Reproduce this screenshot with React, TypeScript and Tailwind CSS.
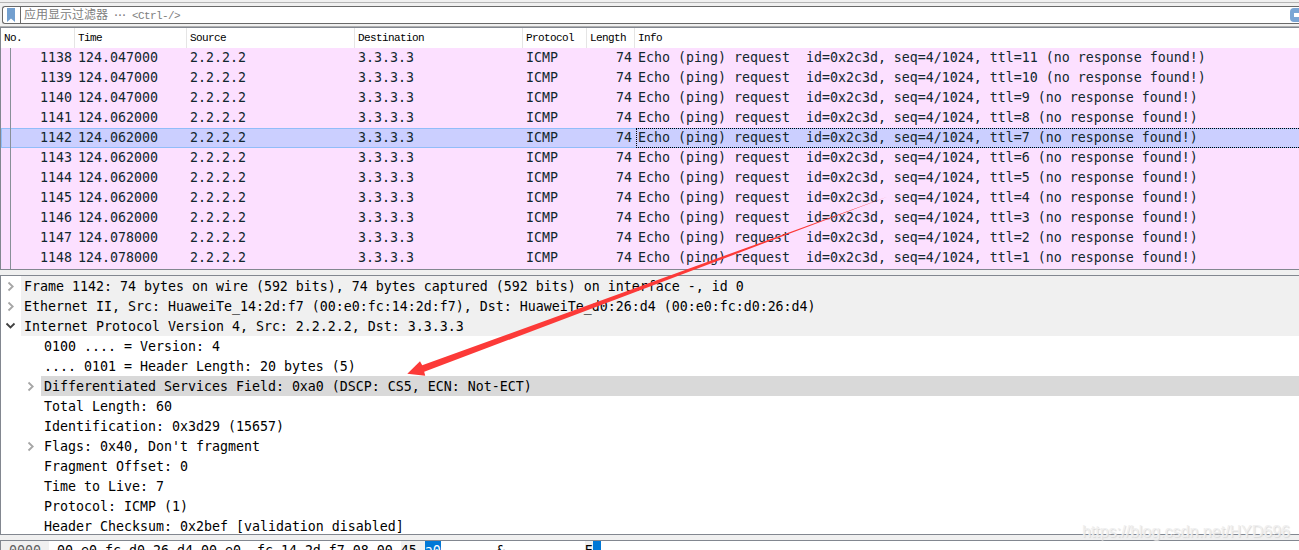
import React from 'react';
import clsx from 'clsx';

interface Packet {
  no: number;
  time: string;
  ttl: number;
}

interface DetailRow {
  text: string;
  level: 0 | 1;
  state?: 'open' | 'closed';
  selected?: boolean;
}

const SELECTED_NO = 1142;

const packets: Packet[] = [
  { no: 1138, time: '124.047000', ttl: 11 },
  { no: 1139, time: '124.047000', ttl: 10 },
  { no: 1140, time: '124.047000', ttl: 9 },
  { no: 1141, time: '124.062000', ttl: 8 },
  { no: 1142, time: '124.062000', ttl: 7 },
  { no: 1143, time: '124.062000', ttl: 6 },
  { no: 1144, time: '124.062000', ttl: 5 },
  { no: 1145, time: '124.062000', ttl: 4 },
  { no: 1146, time: '124.062000', ttl: 3 },
  { no: 1147, time: '124.078000', ttl: 2 },
  { no: 1148, time: '124.078000', ttl: 1 },
];

const details: DetailRow[] = [
  { level: 0, state: 'closed', text: 'Frame 1142: 74 bytes on wire (592 bits), 74 bytes captured (592 bits) on interface -, id 0' },
  { level: 0, state: 'closed', text: 'Ethernet II, Src: HuaweiTe_14:2d:f7 (00:e0:fc:14:2d:f7), Dst: HuaweiTe_d0:26:d4 (00:e0:fc:d0:26:d4)' },
  { level: 0, state: 'open', text: 'Internet Protocol Version 4, Src: 2.2.2.2, Dst: 3.3.3.3' },
  { level: 1, text: '0100 .... = Version: 4' },
  { level: 1, text: '.... 0101 = Header Length: 20 bytes (5)' },
  { level: 1, state: 'closed', selected: true, text: 'Differentiated Services Field: 0xa0 (DSCP: CS5, ECN: Not-ECT)' },
  { level: 1, text: 'Total Length: 60' },
  { level: 1, text: 'Identification: 0x3d29 (15657)' },
  { level: 1, state: 'closed', text: "Flags: 0x40, Don't fragment" },
  { level: 1, text: 'Fragment Offset: 0' },
  { level: 1, text: 'Time to Live: 7' },
  { level: 1, text: 'Protocol: ICMP (1)' },
  { level: 1, text: 'Header Checksum: 0x2bef [validation disabled]' },
];

const COLUMNS = 'grid grid-cols-[74px_112px_168px_168px_64px_48px_1fr]';
const MONO = "font-['DejaVu_Sans_Mono',monospace] text-[13.29px] whitespace-pre";
const HEADER_FONT = "font-['Liberation_Mono','Noto_Sans_CJK_SC',monospace]";

const FilterBar: React.FC = () => (
  <div className="h-[26px] bg-[#f0f0f0]">
    <div className="mb-[3px] h-[3px] border-b border-[#b5b5b5]" />
    <div className="ml-0.5 flex h-[18px] items-center rounded-l-[3px] border border-r-0 border-[#696969] bg-white">
      <svg className="ml-1 h-[14px] w-2 shrink-0" viewBox="0 0 8 14">
        <path d="M0 0h8v14L4 10.5 0 14z" fill="#729fcf" />
      </svg>
      <div className="ml-[5px] h-4 w-px bg-[#696969]" />
      <div className={clsx(HEADER_FONT, 'ml-[3px] flex items-center pt-0.5 text-xs leading-4 text-[#808080]')}>
        <span>应用显示过滤器</span>
        <span className="ml-[5px] w-[19px] text-[10px] font-bold tracking-[-2px]">···</span>
        <span className="text-[11px] tracking-[-0.6px]">&lt;Ctrl-/&gt;</span>
      </div>
      <div className="ml-auto flex h-[14px] w-[9px] items-center justify-end rounded-l-sm bg-[#7aa5d5]">
        <div className="h-1 w-[5px] bg-white" />
      </div>
    </div>
  </div>
);

const TableHeader: React.FC = () => {
  const titles = ['No.', 'Time', 'Source', 'Destination', 'Protocol', 'Length', 'Info'];
  return (
    <div className={clsx(COLUMNS, HEADER_FONT, 'h-5 bg-white text-[11px] leading-[21px] tracking-[-0.6px] text-black')}>
      {titles.map((title) => (
        <div key={title} className="h-5 border-r border-[#e5e5e5] pl-[3px] last:border-r-0">
          {title}
        </div>
      ))}
    </div>
  );
};

const PacketRow: React.FC<{ packet: Packet }> = ({ packet }) => {
  const selected = packet.no === SELECTED_NO;
  return (
    <div
      className={clsx(
        COLUMNS,
        MONO,
        'h-5 leading-5 text-[#12272e]',
        selected
          ? 'bg-[#cbcfff] shadow-[inset_0_1px_#91bdf9,inset_0_-1px_#91bdf9,inset_1px_0_#91bdf9]'
          : 'bg-[#fce0ff]'
      )}
    >
      <div className="pr-[3px] text-right">{packet.no}</div>
      <div className="pl-[3px]">{packet.time}</div>
      <div className="pl-[3px]">2.2.2.2</div>
      <div className="pl-[3px]">3.3.3.3</div>
      <div className="pl-[3px]">ICMP</div>
      <div className="pr-[3px] text-right">74</div>
      <div
        className={clsx(
          selected
            ? 'ml-px border border-r-0 border-dotted border-black pl-px leading-[18px]'
            : 'pl-[3px]'
        )}
      >
        {`Echo (ping) request  id=0x2c3d, seq=4/1024, ttl=${packet.ttl} (no response found!)`}
      </div>
    </div>
  );
};

const Chevron: React.FC<{ open: boolean }> = ({ open }) => (
  <svg className="h-5 w-5 shrink-0" viewBox="0 0 20 20" fill="none" strokeWidth="1.8">
    {open ? (
      <path d="M5.5 7.5L9.5 11.5L13.5 7.5" stroke="#404040" />
    ) : (
      <path d="M7.5 6.5L11.7 10.5L7.5 14.5" stroke="#a6a6a6" />
    )}
  </svg>
);

const Detail: React.FC<{ row: DetailRow }> = ({ row }) => (
  <div className={clsx(MONO, 'flex h-5 leading-[22px] text-black', row.level === 1 && 'pl-5')}>
    {row.state ? <Chevron open={row.state === 'open'} /> : <div className="w-5 shrink-0" />}
    <div
      className={clsx(
        'h-5 grow pl-[3px]',
        row.level === 0 && 'bg-[#f0f0f0]',
        row.selected && 'bg-[#d9d9d9]'
      )}
    >
      {row.text}
    </div>
  </div>
);

const HexPane: React.FC = () => (
  <div
    className={clsx(
      MONO,
      'flex h-[10px] overflow-hidden border-t border-l border-[#828790] bg-white leading-5 text-black'
    )}
  >
    <div className="h-5 w-12 shrink-0 bg-[#f0f0f0] pl-2 text-[#606060]">0000</div>
    <div className="h-5 pl-2">{'00 e0 fc d0 26 d4 00 e0  fc 14 2d f7 08 00 '}</div>
    <div className="h-5 bg-[#f0f0f0]">{'45 '}</div>
    <div className="h-5 bg-[#0078d7] text-white">a0</div>
    <div className="h-5 pl-6">{'....&... ..-...'}</div>
    <div className="h-5 bg-[#f0f0f0]">E</div>
    <div className="h-5 bg-[#0078d7] text-white">.</div>
  </div>
);

const App: React.FC = () => {
  return (
    <div className="relative flex h-[550px] w-[1299px] flex-col overflow-hidden bg-[#f0f0f0]">
      <FilterBar />
      <div className="h-px shrink-0 bg-[#b0b0b0]" />

      <div className="relative h-[243px] shrink-0 border-y border-l border-[#828790] bg-[#fce0ff]">
        <TableHeader />
        {packets.map((packet) => (
          <PacketRow key={packet.no} packet={packet} />
        ))}
        {/* conversation marker running down the first column */}
        <div className="absolute top-5 bottom-0 left-[9px] w-px bg-[#889098]" />
      </div>

      <div className="mt-[5px] h-[260px] shrink-0 overflow-hidden border-y border-l border-[#828790] bg-white">
        {details.map((row) => (
          <Detail key={row.text} row={row} />
        ))}
      </div>

      <div className="mt-[5px] shrink-0">
        <HexPane />
      </div>

      {/* annotation arrow */}
      <svg className="pointer-events-none absolute inset-0" width="1299" height="550" viewBox="0 0 1299 550">
        <polygon
          points="407.3,373.7 420,361.3 422.2,365.2 888,196.5 424.2,371.8 425.2,375.8"
          fill="#fc3a38"
        />
      </svg>

      <div className="absolute right-[9px] bottom-[8px] font-['Liberation_Sans',sans-serif] text-base leading-5 text-[#f0f0f0] [text-shadow:1px_1px_1px_#d8d8d8]">
        https://blog.csdn.net/HYD696
      </div>
    </div>
  );
};

export default App;
